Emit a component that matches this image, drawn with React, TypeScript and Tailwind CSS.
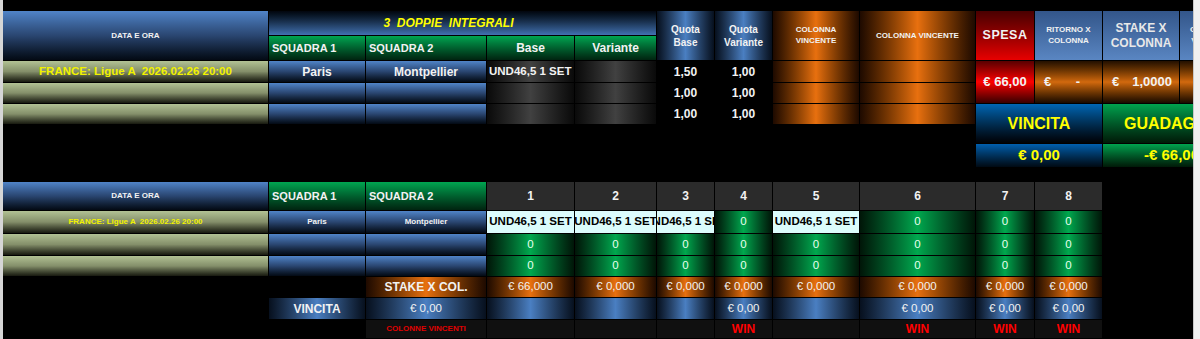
import React from 'react';

// gradients used by the sheet cells
const blueV = 'bg-linear-to-b from-[#5084c8] via-[#2a4671] to-[#040a14]';
const olive = 'bg-linear-to-b from-[#b2c294] via-[#848f6a] to-[#181a10]';
const greenV = 'bg-linear-to-b from-[#00a651] to-[#002410]';
const blueH = 'bg-linear-to-r from-[#07101e] via-[#4a7fc2] to-[#07101e]';
const orangeH = 'bg-linear-to-r from-[#1e0a00] via-[#e8700f] to-[#1e0a00]';
const greenH = 'bg-linear-to-r from-[#001608] via-[#00a84e] to-[#001608]';
const grayH = 'bg-linear-to-r from-[#0a0a0a] via-[#414141] to-[#0a0a0a]';
const orangeV = 'bg-linear-to-b from-[#241000] via-[#d2690e] to-[#1a0a00]';
const redV = 'bg-linear-to-b from-[#5a0000] via-[#ff0000] to-[#3a0000]';
const headBlue = 'bg-linear-to-b from-[#33568a] to-[#5a86c2]';

const Cell: React.FC<{ className?: string; children?: React.ReactNode }> = ({ className = '', children }) => (
    <div className={`flex items-center overflow-hidden whitespace-nowrap border-r border-b border-black ${className}`}>
        {children}
    </div>
);

const topRows = [
    { row: 'row-start-4', first: true, qb: '1,50', qv: '1,00' },
    { row: 'row-start-5', first: false, qb: '1,00', qv: '1,00' },
    { row: 'row-start-6', first: false, qb: '1,00', qv: '1,00' },
];

const cols = [
    { col: 'col-start-4', n: '1', set: true, win: false, stake: '€ 66,000' },
    { col: 'col-start-5', n: '2', set: true, win: false, stake: '€ 0,000' },
    { col: 'col-start-6', n: '3', set: true, win: false, stake: '€ 0,000' },
    { col: 'col-start-7', n: '4', set: false, win: true, stake: '€ 0,000' },
    { col: 'col-start-8', n: '5', set: true, win: false, stake: '€ 0,000' },
    { col: 'col-start-9', n: '6', set: false, win: true, stake: '€ 0,000' },
    { col: 'col-start-10', n: '7', set: false, win: true, stake: '€ 0,000' },
    { col: 'col-start-11', n: '8', set: false, win: true, stake: '€ 0,000' },
];

const lowRows = ['row-start-11', 'row-start-12', 'row-start-13'];

export default function App() {
    return (
        <div className="flex h-[339px] w-[1200px] overflow-hidden bg-black font-['Liberation_Sans',Arial,sans-serif] text-[#f2f2f2]">
            <div className="w-[3px] shrink-0 bg-[#d6d6d6]" />
            <div className="w-[1190px] shrink-0 overflow-hidden">
                <div className="grid w-max grid-cols-[266px_97px_121px_88px_82px_58px_58px_87px_116px_59px_68px_77px_61px] grid-rows-[11px_25px_25px_22px_21px_21px_19px_24px_14px_29px_23px_22px_21px_21px_22px_19px]">
                    {/* top header */}
                    <Cell className={`col-start-1 row-start-2 row-span-2 justify-center text-[8px] font-bold ${blueV}`}>DATA E ORA</Cell>
                    <Cell className="col-start-2 col-span-4 row-start-2 justify-center bg-linear-to-b from-[#02060d] to-[#4272b2] pr-[28px] text-[12px] font-bold italic text-[#ffff00] whitespace-pre">
                        3  DOPPIE  INTEGRALI
                    </Cell>
                    <Cell className={`col-start-2 row-start-3 pl-[3px] text-[11px] font-bold ${greenV}`}>SQUADRA 1</Cell>
                    <Cell className={`col-start-3 row-start-3 pl-[3px] text-[11px] font-bold ${greenV}`}>SQUADRA 2</Cell>
                    <Cell className={`col-start-4 row-start-3 justify-center text-[12px] font-bold ${greenV}`}>Base</Cell>
                    <Cell className={`col-start-5 row-start-3 justify-center text-[12px] font-bold ${greenV}`}>Variante</Cell>
                    <Cell className={`col-start-6 row-start-2 row-span-2 justify-center text-center text-[10px] font-bold leading-[1.3] ${blueH}`}>
                        <span>Quota<br />Base</span>
                    </Cell>
                    <Cell className={`col-start-7 row-start-2 row-span-2 justify-center text-center text-[10px] font-bold leading-[1.3] ${blueH}`}>
                        <span>Quota<br />Variante</span>
                    </Cell>
                    <Cell className={`col-start-8 row-start-2 row-span-2 justify-center text-center text-[8px] font-bold leading-[1.3] ${orangeH}`}>
                        <span>COLONNA<br />VINCENTE</span>
                    </Cell>
                    <Cell className={`col-start-9 row-start-2 row-span-2 justify-center text-[8px] font-bold ${orangeH}`}>COLONNA VINCENTE</Cell>
                    <Cell className="col-start-10 row-start-2 row-span-2 justify-center bg-linear-to-b from-[#4a0000] to-[#e80000] text-[12.5px] font-bold tracking-[0.5px]">SPESA</Cell>
                    <Cell className={`col-start-11 row-start-2 row-span-2 justify-center text-center text-[8px] font-bold leading-[1.35] ${headBlue}`}>
                        <span>RITORNO X<br />COLONNA</span>
                    </Cell>
                    <Cell className={`col-start-12 row-start-2 row-span-2 justify-center text-center text-[12px] font-bold leading-[1.2] text-[#e8e8e8] ${headBlue}`}>
                        <span>STAKE X<br />COLONNA</span>
                    </Cell>
                    <Cell className={`col-start-13 row-start-2 row-span-2 justify-center text-center text-[8px] font-bold leading-[1.35] ${headBlue}`}>
                        <span>COLONNE<br />VINCENTI</span>
                    </Cell>

                    {/* top data rows */}
                    {topRows.map(r => (
                        <React.Fragment key={r.row}>
                            <Cell className={`col-start-1 ${r.row} justify-center text-[11.5px] font-bold text-[#f2f200] whitespace-pre ${olive}`}>
                                {r.first ? 'FRANCE: Ligue A  2026.02.26 20:00' : ''}
                            </Cell>
                            <Cell className={`col-start-2 ${r.row} justify-center text-[12px] font-bold ${blueV}`}>{r.first ? 'Paris' : ''}</Cell>
                            <Cell className={`col-start-3 ${r.row} justify-center text-[12px] font-bold ${blueV}`}>{r.first ? 'Montpellier' : ''}</Cell>
                            <Cell className={`col-start-4 ${r.row} pl-[2px] text-[11.5px] font-bold ${grayH}`}>{r.first ? 'UND46,5 1 SET' : ''}</Cell>
                            <Cell className={`col-start-5 ${r.row} ${grayH}`} />
                            <Cell className={`col-start-6 ${r.row} justify-center border-[#2a2a2a] text-[12px] font-bold`}>{r.qb}</Cell>
                            <Cell className={`col-start-7 ${r.row} justify-center border-[#2a2a2a] text-[12px] font-bold`}>{r.qv}</Cell>
                            <Cell className={`col-start-8 ${r.row} ${orangeH}`} />
                            <Cell className={`col-start-9 ${r.row} ${orangeH}`} />
                        </React.Fragment>
                    ))}

                    <Cell className={`col-start-10 row-start-4 row-span-2 justify-center text-[13px] font-bold ${redV}`}>€ 66,00</Cell>
                    <Cell className={`col-start-11 row-start-4 row-span-2 justify-between pl-[9px] pr-[22px] text-[13px] font-bold ${orangeV}`}>
                        <span>€</span>
                        <span>-</span>
                    </Cell>
                    <Cell className={`col-start-12 row-start-4 row-span-2 justify-between pl-[9px] pr-[7px] text-[13px] font-bold ${orangeV}`}>
                        <span>€</span>
                        <span>1,0000</span>
                    </Cell>
                    <Cell className={`col-start-13 row-start-4 row-span-2 ${orangeV}`} />

                    <Cell className="col-start-10 col-span-2 row-start-6 row-span-2 justify-center bg-linear-to-b from-[#0066b4] to-[#000306] text-[16px] font-bold text-[#ffff00]">VINCITA</Cell>
                    <Cell className="col-start-12 col-span-2 row-start-6 row-span-2 justify-center bg-linear-to-b from-[#00a24e] to-[#001a08] text-[16px] font-bold text-[#ffff00]">GUADAGNO</Cell>
                    <Cell className="col-start-10 col-span-2 row-start-8 justify-center bg-linear-to-b from-[#005fae] to-[#000a14] text-[15px] font-bold text-[#ffff00]">€ 0,00</Cell>
                    <Cell className="col-start-12 col-span-2 row-start-8 justify-center bg-linear-to-b from-[#00a24e] to-[#001a08] text-[15px] font-bold text-[#ffff00]">-€ 66,00</Cell>

                    {/* lower header */}
                    <Cell className={`col-start-1 row-start-10 justify-center text-[8px] font-bold ${blueV}`}>DATA E ORA</Cell>
                    <Cell className={`col-start-2 row-start-10 pl-[3px] text-[11px] font-bold ${greenV}`}>SQUADRA 1</Cell>
                    <Cell className={`col-start-3 row-start-10 pl-[3px] text-[11px] font-bold ${greenV}`}>SQUADRA 2</Cell>
                    {cols.map(c => (
                        <Cell key={c.n} className={`${c.col} row-start-10 justify-center bg-[#2b2b2b] text-[12px] font-bold`}>{c.n}</Cell>
                    ))}

                    {/* lower data rows */}
                    {lowRows.map((row, i) => (
                        <React.Fragment key={row}>
                            <Cell className={`col-start-1 ${row} justify-center text-[8px] font-bold text-[#f2f200] whitespace-pre ${olive}`}>
                                {i === 0 ? 'FRANCE: Ligue A  2026.02.26 20:00' : ''}
                            </Cell>
                            <Cell className={`col-start-2 ${row} justify-center text-[8px] font-bold ${blueV}`}>{i === 0 ? 'Paris' : ''}</Cell>
                            <Cell className={`col-start-3 ${row} justify-center text-[8px] font-bold ${blueV}`}>{i === 0 ? 'Montpellier' : ''}</Cell>
                            {cols.map(c =>
                                i === 0 && c.set ? (
                                    <Cell key={c.n} className={`${c.col} ${row} justify-center bg-[#dcfcfc] text-[11.5px] font-bold text-black`}>UND46,5 1 SET</Cell>
                                ) : (
                                    <Cell key={c.n} className={`${c.col} ${row} justify-center text-[11.5px] text-[#e8ffee] ${greenH}`}>0</Cell>
                                )
                            )}
                        </React.Fragment>
                    ))}

                    <Cell className={`col-start-3 row-start-14 justify-center text-[12px] font-bold ${orangeH}`}>STAKE X COL.</Cell>
                    {cols.map(c => (
                        <Cell key={c.n} className={`${c.col} row-start-14 justify-center text-[11.5px] ${orangeH}`}>{c.stake}</Cell>
                    ))}

                    <Cell className={`col-start-2 row-start-15 justify-center text-[12px] font-bold ${blueH}`}>VINCITA</Cell>
                    <Cell className={`col-start-3 row-start-15 justify-center text-[11.5px] ${blueH}`}>€ 0,00</Cell>
                    {cols.map(c => (
                        <Cell key={c.n} className={`${c.col} row-start-15 justify-center text-[11.5px] ${blueH}`}>{c.win ? '€ 0,00' : ''}</Cell>
                    ))}

                    <Cell className="col-start-3 row-start-16 justify-center border-[#242424] bg-[#101010] text-[8px] font-bold text-[#e00000]">COLONNE VINCENTI</Cell>
                    {cols.map(c => (
                        <Cell key={c.n} className={`${c.col} row-start-16 justify-center border-[#242424] bg-[#101010] text-[12px] font-bold text-[#ff0000]`}>
                            {c.win ? 'WIN' : ''}
                        </Cell>
                    ))}
                </div>
            </div>
            <div className="w-[7px] shrink-0 border-l border-[#c8c8c8] bg-[#f0f0f0]" />
        </div>
    );
}
